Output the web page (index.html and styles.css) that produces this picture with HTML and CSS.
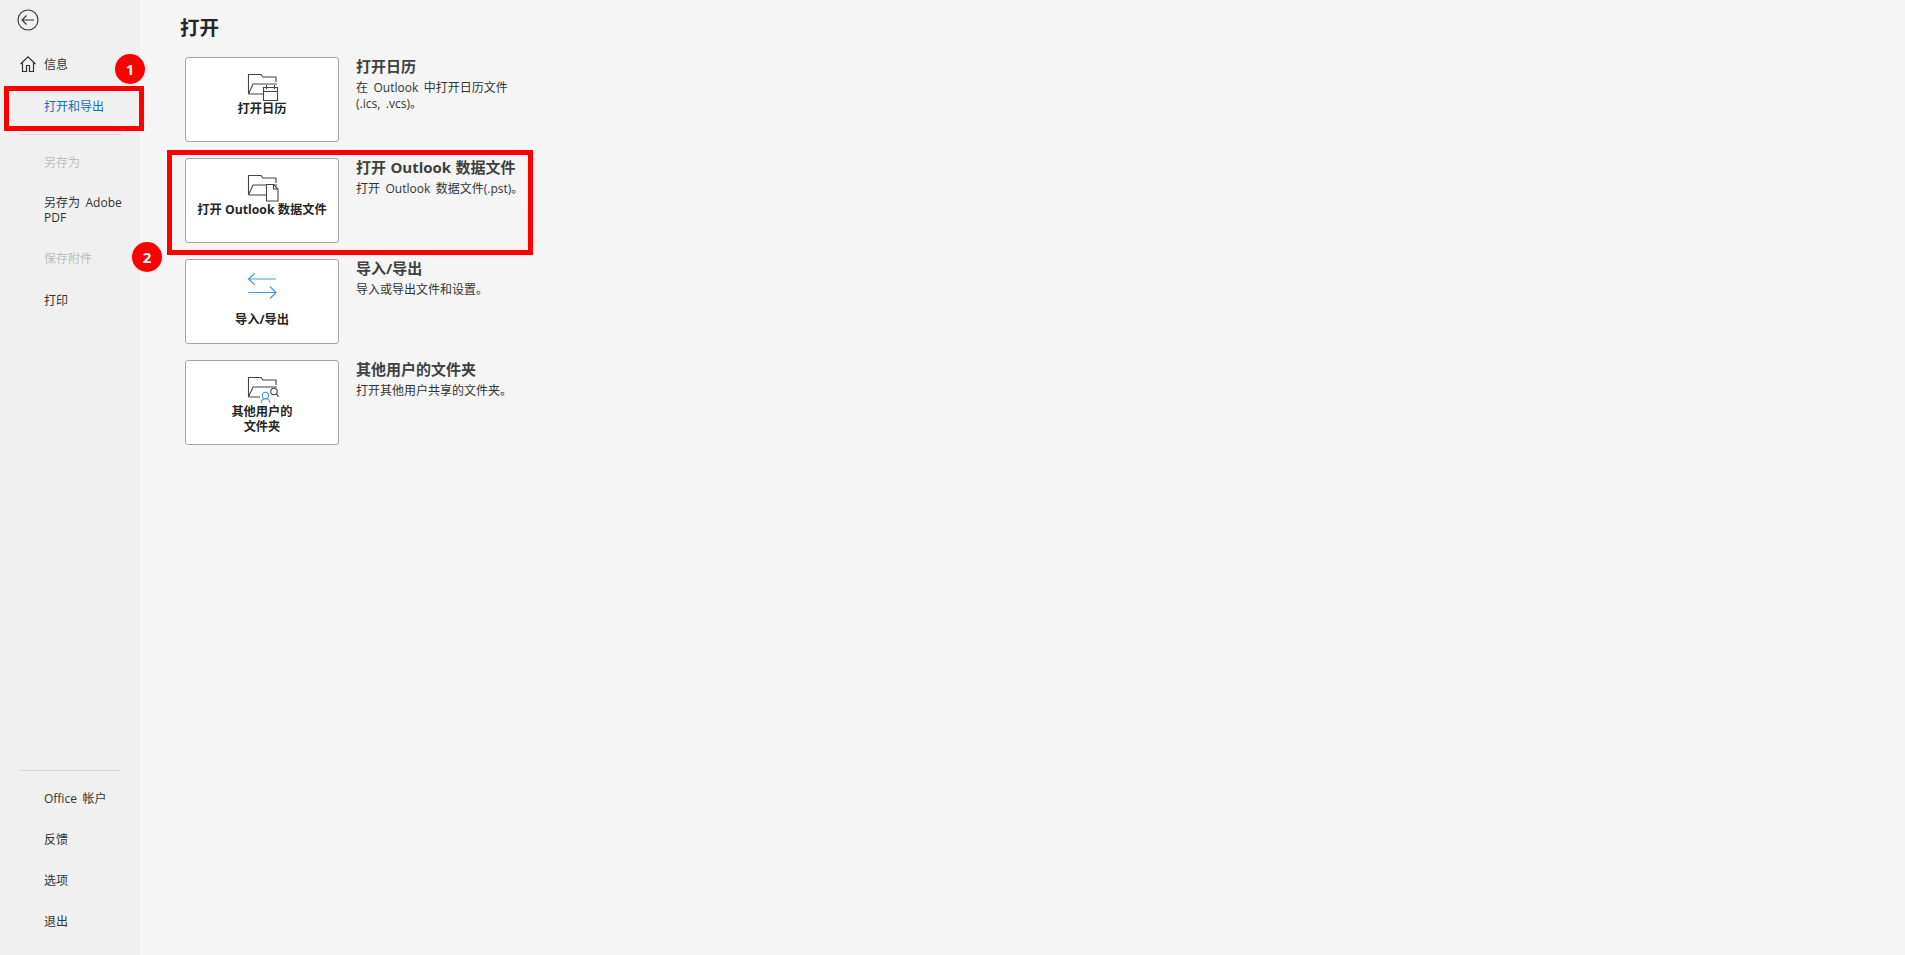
FILE: index.html
```html
<!DOCTYPE html>
<html lang="zh-CN">
<head>
  <meta charset="UTF-8" />
  <title>打开和导出</title>
  <link rel="stylesheet" href="styles.css">
</head>
<body>
  <aside class="sidebar">
    <div class="nav-top">
      <button class="back" aria-label="返回">
        <svg width="22" height="22" viewBox="0 0 22 22" fill="none" stroke="#333" stroke-width="1.1">
          <circle cx="11" cy="11" r="10"/>
          <path d="M5 11h12M9.500 6.500 5 11l4.500 4.500"/>
        </svg>
      </button>
      <a class="nav-item home">
        <svg width="18" height="18" viewBox="0 0 18 18" fill="none" stroke="#333" stroke-width="1.2">
          <path d="M1.500 9 9 1.800 16.500 9M3.500 7.500V16.500h4V10.500h3V16.500h4V7.500"/>
        </svg>
        信息
      </a>
      <a class="nav-item active">打开和导出</a>
      <hr class="nav-line">
      <a class="nav-item disabled">另存为</a>
      <a class="nav-item two-line">另存为 Adobe PDF</a>
      <a class="nav-item disabled">保存附件</a>
      <a class="nav-item">打印</a>
    </div>
    <div class="nav-bottom">
      <hr class="nav-line">
      <a class="nav-item">Office 帐户</a>
      <a class="nav-item">反馈</a>
      <a class="nav-item">选项</a>
      <a class="nav-item">退出</a>
    </div>
  </aside>

  <main class="content">
    <h1>打开</h1>
    <div class="option-list">
      <section class="option">
        <button class="tile">
          <svg class="tile-icon" width="36" height="30" viewBox="0 0 36 30" fill="none" stroke="#444" stroke-width="1.1">
            <path d="M3.500 21V1.500H16l2 2.500H31V9M3.500 21 8 11h24M3.500 21H18"/>
            <path d="M18.500 14.500h14v13h-14z" fill="#fff"/>
            <path d="M18.500 18.500h14M21.500 12v4M29.500 12v4"/>
          </svg>
          <span>打开日历</span>
        </button>
        <div class="option-text">
          <h2>打开日历</h2>
          <p>在 Outlook 中打开日历文件<br>(.ics, .vcs)。</p>
        </div>
      </section>

      <section class="option">
        <button class="tile">
          <svg class="tile-icon" width="36" height="30" viewBox="0 0 36 30" fill="none" stroke="#444" stroke-width="1.1">
            <path d="M3.500 21V1.500H16l2 2.500H31V9M3.500 21 8 11h24M3.500 21H21"/>
            <path d="M21.500 10.500h7l4.500 4.500v12H21.500z" fill="#fff"/>
            <path d="M28.500 10.500V15H33"/>
          </svg>
          <span>打开 Outlook 数据文件</span>
        </button>
        <div class="option-text">
          <h2>打开 Outlook 数据文件</h2>
          <p>打开 Outlook 数据文件(.pst)。</p>
        </div>
      </section>

      <section class="option">
        <button class="tile">
          <svg class="tile-icon arrows" width="36" height="30" viewBox="0 0 36 30" fill="none" stroke="#3f9ddd" stroke-width="1.200">
            <path d="M3.500 6H31M10 0 3.500 6 10 12"/>
            <path d="M3.500 19.500H31M25 13.500 31 19.500 25 25.500"/>
          </svg>
          <span>导入/导出</span>
        </button>
        <div class="option-text">
          <h2>导入/导出</h2>
          <p>导入或导出文件和设置。</p>
        </div>
      </section>

      <section class="option">
        <button class="tile">
          <svg class="tile-icon" width="36" height="30" viewBox="0 0 36 30" fill="none" stroke="#444" stroke-width="1.1">
            <path d="M3.500 21V1.500H16l2 2.500H31V9M3.500 21 8 11h24M3.500 21H15"/>
            <circle cx="29" cy="15.500" r="3.200" fill="#fff"/>
            <path d="M31.500 18c1 .8 1.500 1.800 1.800 3"/>
            <g stroke="#3f9ddd" fill="#fff">
              <circle cx="20.500" cy="19.500" r="3.200"/>
              <path d="M16 27c.3-2.700 2-4.300 4.500-4.300s4.200 1.600 4.500 4.300" fill="none"/>
            </g>
          </svg>
          <span>其他用户的<br>文件夹</span>
        </button>
        <div class="option-text">
          <h2>其他用户的文件夹</h2>
          <p>打开其他用户共享的文件夹。</p>
        </div>
      </section>
    </div>
  </main>

  <!-- red callouts drawn on top of the screenshot -->
  <div class="mark mark-nav"></div>
  <div class="mark mark-option"></div>
  <div class="badge badge-1">1</div>
  <div class="badge badge-2">2</div>
</body>
</html>
```

FILE: styles.css
```css
* {
  box-sizing: border-box;
}
html, body {
  height: 100%;
}
body {
  margin: 0;
  display: flex;
  height: 955px;
  overflow: hidden;
  position: relative;
  background: #f5f5f5;
  color: #333;
  font-family: "Open Sans", "Noto Sans CJK SC", sans-serif;
  font-size: 12px;
  word-spacing: 2.4px;
}
button {
  font-family: inherit;
}

/* left nav */
.sidebar {
  width: 140px;
  flex: none;
  background: #f0f0f0;
  display: flex;
  flex-direction: column;
  justify-content: space-between;
  padding-top: 9px;
  padding-bottom: 13px;
}
.back {
  display: block;
  width: 22px;
  height: 22px;
  margin: 0 0 12px 17px;
  padding: 0;
  border: 0;
  background: none;
}
.nav-item {
  display: flex;
  align-items: center;
  min-height: 41px;
  padding: 0 10px 0 44px;
  line-height: 15px;
  position: relative;
}
.nav-top .nav-item {
  min-height: 42px;
}
.nav-top .nav-item.two-line {
  min-height: 54px;
}
.nav-item.home svg {
  position: absolute;
  left: 19px;
  top: 12px;
}
.nav-item.active {
  color: #106ebe;
}
.nav-item.disabled {
  color: #bdbdbd;
}
.nav-line {
  height: 1px;
  border: 0;
  background: #d6d6d6;
}
.nav-top .nav-line {
  margin: 7px 19px 6px 20px;
}
.nav-bottom .nav-line {
  margin: 0 20px 7px;
}

/* main area */
.content {
  flex: 1;
  padding: 14px 0 0 40px;
}
h1 {
  margin: 0 0 15px;
  font-size: 19.500px;
  line-height: 28px;
  font-weight: 700;
  color: #262626;
}
.option-list {
  display: flex;
  flex-direction: column;
  gap: 16px;
  padding-left: 5px;
}
.option {
  display: flex;
  gap: 17px;
}
.tile {
  width: 154px;
  height: 85px;
  flex: none;
  display: flex;
  flex-direction: column;
  align-items: center;
  padding: 15px 0 0;
  border: 1px solid #a6a6a6;
  border-radius: 3px;
  background: #fff;
  color: #262626;
  font-size: 12.250px;
  font-weight: 700;
  line-height: 15px;
  text-align: center;
  word-spacing: 0;
}
.tile-icon {
  display: block;
  margin-bottom: -2px;
  margin-left: 2px;
}
.tile-icon.arrows {
  margin-top: -2px;
  margin-bottom: 9px;
}
.option-text h2 {
  margin: -1px 0 0;
  font-size: 15px;
  line-height: 20px;
  font-weight: 700;
  color: #404040;
  word-spacing: 0.5px;
}
.option-text p {
  margin: 4px 0 0;
  font-size: 12px;
  line-height: 16px;
}

/* callouts */
.mark {
  position: absolute;
  border: 5px solid #f00;
}
.mark-nav {
  left: 4px;
  top: 86px;
  width: 140px;
  height: 45px;
}
.mark-option {
  left: 167px;
  top: 150px;
  width: 366px;
  height: 105px;
}
.badge {
  position: absolute;
  width: 30px;
  height: 30px;
  border-radius: 50%;
  background: #f00;
  color: #fff;
  font-size: 15px;
  font-weight: 700;
  line-height: 30px;
  text-align: center;
}
.badge-1 {
  left: 115px;
  top: 54px;
}
.badge-2 {
  left: 132px;
  top: 242px;
}
```
